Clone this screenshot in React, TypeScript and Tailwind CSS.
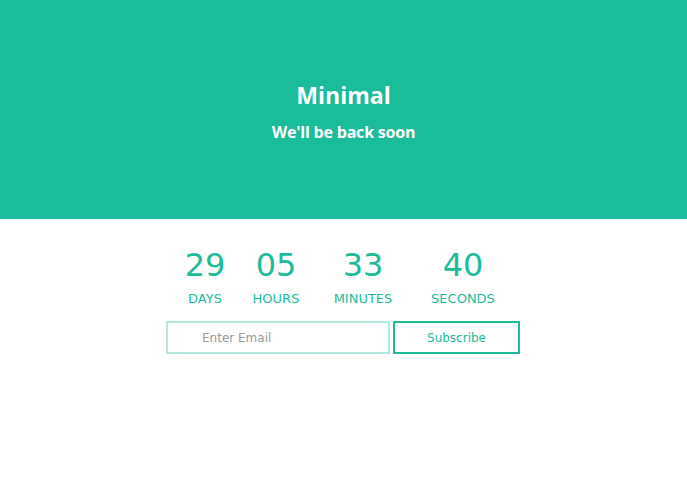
import React from "react";

const items = [
  { v: "29", l: "DAYS", w: "w-[68px]" },
  { v: "05", l: "HOURS", w: "w-[74px]" },
  { v: "33", l: "MINUTES", w: "w-[100px]" },
  { v: "40", l: "SECONDS", w: "w-[100px]" },
];

export default function App() {
  return (
    <div className="w-[687px] h-[480px] bg-white font-['DejaVu_Sans',Verdana,sans-serif]">
      <div className="h-[219px] bg-[#1abc9c] flex flex-col items-center pt-[80px]">
        <h1 className="text-white text-[23px] leading-[30px] font-bold font-['Open_Sans','Noto_Sans',sans-serif]">
          Minimal
        </h1>
        <p className="text-white text-[16px] leading-[20px] font-bold mt-[12px] tracking-[-0.2px] font-['Open_Sans','Noto_Sans',sans-serif]">
          We'll be back soon
        </p>
      </div>
      <div className="flex justify-center pt-[26px]">
        <div className="flex ml-[-3px]">
          {items.map((it) => (
            <div key={it.l} className={`${it.w} flex flex-col items-center`}>
              <div className="text-[#1abc9c] text-[32px] leading-[40px]">{it.v}</div>
              <div className="text-[#1abc9c] text-[13px] leading-[16px] mt-[6px]">{it.l}</div>
            </div>
          ))}
        </div>
      </div>
      <div className="flex justify-center mt-[14px] ml-[-1px]">
        <input
          placeholder="Enter Email"
          className="w-[224px] h-[33px] border-2 border-solid border-[#b3e9de] pl-[34px] text-[12px] text-[#888] placeholder:text-[#999] outline-none bg-white font-['DejaVu_Sans',sans-serif]"
        />
        <div className="ml-[3px] w-[127px] h-[33px] border-2 border-solid border-[#1abc9c] text-[#1abc9c] text-[12px] bg-white flex items-center justify-center cursor-pointer font-['DejaVu_Sans',sans-serif]">
          Subscribe
        </div>
      </div>
    </div>
  );
}
